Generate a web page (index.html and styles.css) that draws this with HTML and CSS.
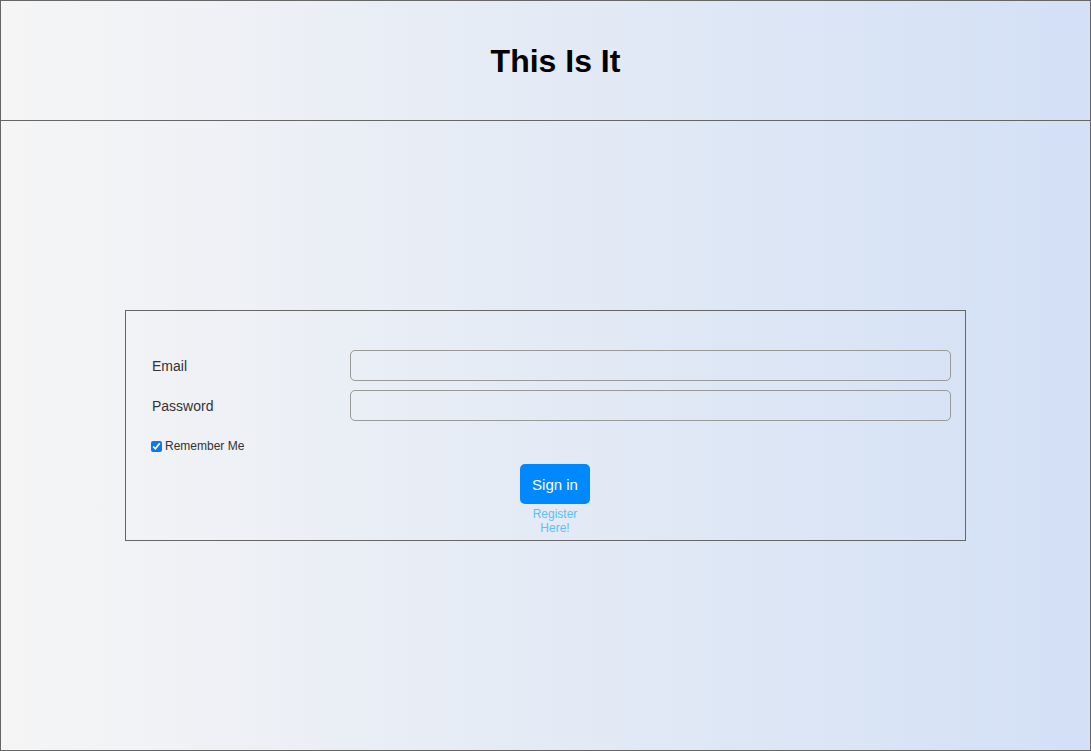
FILE: index.html
```html
<!DOCTYPE html>
<html>
<head>
<meta charset="utf-8">
<link rel="stylesheet" href="styles.css">
</head>
<body>
<div class="page">
  <header class="header">
    <h1 class="title">This Is It</h1>
  </header>
  <main class="main">
    <form class="login">
      <div class="row">
        <label class="label" for="email">Email</label>
        <input class="field" id="email" type="email">
      </div>
      <div class="row">
        <label class="label" for="pw">Password</label>
        <input class="field" id="pw" type="password">
      </div>
      <div class="remember">
        <input class="check" type="checkbox" checked id="rem">
        <label for="rem">Remember Me</label>
      </div>
      <div class="actions">
        <button class="btn" type="button">Sign in</button>
        <a class="register" href="#">Register Here!</a>
      </div>
    </form>
  </main>
</div>
</body>
</html>
```
FILE: styles.css
```css
* { box-sizing: border-box; }
html, body { margin: 0; padding: 0; }
body {
  font-family: "Liberation Sans", Arial, sans-serif;
  color: #333;
}
.page {
  width: 1091px;
  height: 751px;
  border: 1px solid #666;
  background: linear-gradient(to right, #f5f5f5, #d3e0f5);
  display: flex;
  flex-direction: column;
}
.header {
  height: 120px;
  border-bottom: 1px solid #666;
  display: flex;
  align-items: center;
  justify-content: center;
  padding-left: 20px;
  flex-shrink: 0;
}
.title {
  margin: 0;
  font-size: 32px;
  font-weight: bold;
  color: #000;
  line-height: 36px;
}
.main {
  flex: 1;
  padding: 189px 124px 0 124px;
}
.login {
  border: 1px solid #666;
  padding: 39px 14px 5px 26px;
  display: flex;
  flex-direction: column;
}
.row {
  display: grid;
  grid-template-columns: 198px 1fr;
  align-items: center;
  margin-bottom: 9px;
}
.label {
  font-size: 14px;
  color: #333;
}
.field {
  height: 31px;
  border: 1px solid #999;
  border-radius: 5px;
  background: transparent;
  margin: 0;
  padding: 0 8px;
  font: inherit;
}
.remember {
  margin-top: 9px;
  display: flex;
  align-items: center;
  font-size: 12px;
  line-height: 14px;
  color: #333;
}
.check {
  width: 11px;
  height: 11px;
  margin: 0 3px 0 -1px;
  accent-color: #0a78f0;
}
.actions {
  align-self: center;
  margin-left: 7px;
  width: 70px;
  margin-top: 11px;
  display: flex;
  flex-direction: column;
  align-items: center;
  text-align: center;
}
.btn {
  width: 70px;
  height: 40px;
  border: none;
  border-radius: 5px;
  background: #0088ff;
  color: #fff;
  font-family: "Liberation Sans", Arial, sans-serif;
  font-size: 15px;
  padding: 0;
}
.register {
  margin-top: 3px;
  font-size: 12px;
  line-height: 14px;
  color: #5bc0f7;
  text-decoration: none;
}
```
